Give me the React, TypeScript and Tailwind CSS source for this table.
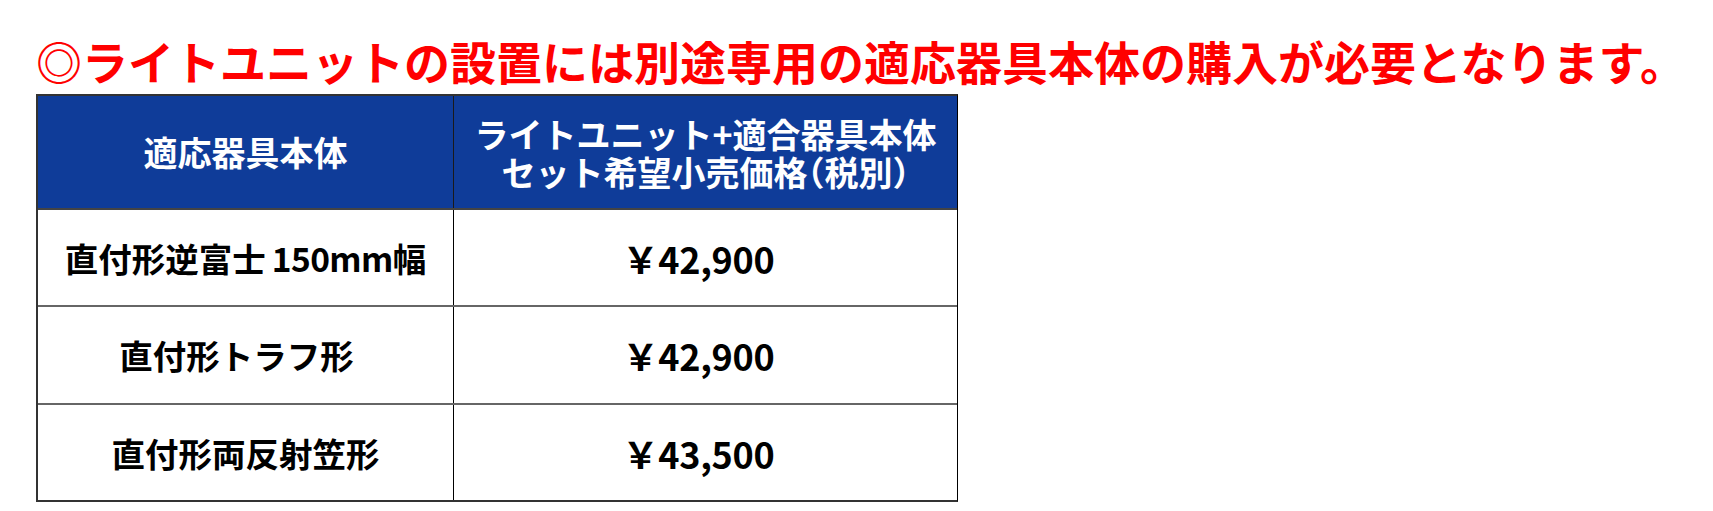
import React from "react";

const rows: { label: React.ReactNode; price: string; labelPad: string }[] = [
  {
    label: (
      <>
        直付形逆富士<span className="ml-[6px] tracking-[-0.6px]">150mm</span>幅
      </>
    ),
    price: "￥42,900",
    labelPad: "",
  },
  { label: "直付形トラフ形", price: "￥42,900", labelPad: "pr-[18px]" },
  { label: "直付形両反射笠形", price: "￥43,500", labelPad: "" },
];

export default function App() {
  return (
    <div
      className="w-[1713px] h-[511px] bg-white overflow-hidden"
      style={{ fontFamily: '"Noto Sans CJK JP", "Noto Sans", sans-serif' }}
    >
      <div className="pt-[35px] pl-[36px] text-[46px] leading-[50px] font-bold text-[#ff0000] whitespace-nowrap">
        ◎ライトユニットの設置には別途専用の適応器具本体の購入が必要となります。
      </div>
      <div className="mt-[9px] ml-[36px] w-[922px] border-2 border-[#333333] border-r border-r-black flex flex-col">
        <div className="flex h-[114px] bg-[#0f3c99] border-b-2 border-b-[#444444] text-white font-bold text-[34px]">
          <div className="w-[416px] flex items-center justify-center leading-[40px] border-r border-r-[#1a1a1a]">
            適応器具本体
          </div>
          <div className="flex-1 flex items-center justify-center pt-[2px]">
            <p className="text-center leading-[38px]">
              ライトユニット+適合器具本体
              <br />
              <span className="[font-feature-settings:'halt']">セット希望小売価格（税別）</span>
            </p>
          </div>
        </div>
        {rows.map((r, i) => (
          <div
            key={i}
            className={`flex font-bold text-black ${
              i === 0
                ? "h-[97px] border-b-2 border-b-[#666666]"
                : i === 1
                ? "h-[98px] border-b-2 border-b-[#666666]"
                : "h-[95px]"
            }`}
          >
            <div
              className={`w-[416px] flex items-center justify-center text-[33.5px] leading-none border-r border-r-black ${r.labelPad}`}
            >
              {r.label}
            </div>
            <div className="flex-1 flex items-center justify-center text-[36px] tracking-[-0.3px] leading-none pr-[14px]">
              {r.price}
            </div>
          </div>
        ))}
      </div>
    </div>
  );
}
